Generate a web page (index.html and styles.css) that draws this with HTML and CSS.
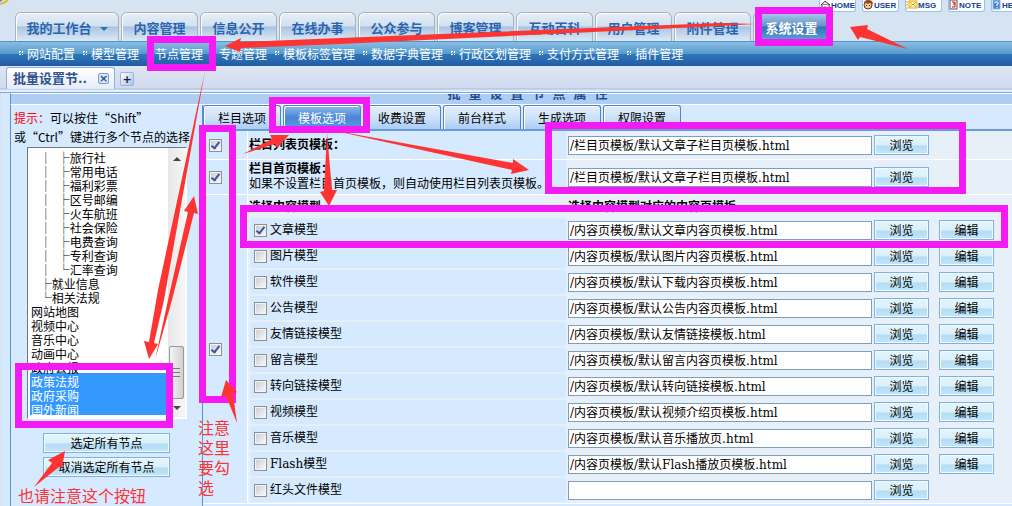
FILE: index.html
```
<!DOCTYPE html>
<html lang="zh-CN">
<head>
  <meta charset="UTF-8">
  <meta name="viewport" content="width=device-width, initial-scale=1.0">
  <title>批量设置节点属性</title>
  <link rel="stylesheet" href="styles.css">
</head>
<body>
  <div class="page">
    <header class="header">
      <svg class="logo" width="12" height="14" viewBox="0 0 12 14">
        <path d="M0 0h3L0 2z" fill="#4b83cd" />
        <path d="M0 4 C3 3 6 2 8 0" fill="none" stroke="#f0b429" stroke-width="2" />
      </svg>
      <div class="quick-links">
        <a href="#home">
          <svg width="11" height="11" viewBox="0 0 11 11"><path d="M1 5 L5 1 L10 5z" fill="#ddd" stroke="#444" /><path d="M2 5v4h2v-2h2v2h3V5" fill="#fff" stroke="#555" /></svg>HOME
        </a>
        <a href="#user">
          <svg width="11" height="11" viewBox="0 0 11 11"><circle cx="5" cy="5" r="4" fill="#f6c79b" stroke="#6b3310" /><path d="M1 4 Q1 0 5 0 Q10 0 10 4 L7 3 L5 4 L3 3z" fill="#8a4a1c" /><path d="M3 5h1v1H3zM6 5h1v1H6z" fill="#333" /></svg>USER
        </a>
        <a href="#msg">
          <svg width="12" height="11" viewBox="0 0 12 11"><path d="M0 2h2M0 5h2M0 8h2" stroke="#f0a000" /><rect x="3" y="1" width="8" height="7" fill="#fff6c8" stroke="#e6a700" /><path d="M4 2l3 3 3-3M4 7l2-2M10 7L8 5" fill="none" stroke="#e6a700" /></svg>MSG
        </a>
        <a href="#note">
          <svg width="10" height="11" viewBox="0 0 10 11"><rect x="1" y="0" width="7" height="9" fill="#fff" stroke="#555" /><path d="M3 2h3v5H3M4 4h2" fill="none" stroke="#d00" /></svg>NOTE
        </a>
        <a href="#help">
          <svg width="10" height="11" viewBox="0 0 10 11"><rect x="1" y="0" width="7" height="9" fill="#4b83cd" stroke="#8fb6e6" /><path d="M3 3V2h3v2H5v2M5 7v1" fill="none" stroke="#fff" /></svg>HELP
        </a>
      </div>
      <nav class="main-tabs">
        <a class="wide" href="#desk">我的工作台<span class="caret"></span></a>
        <a href="#content">内容管理</a>
        <a href="#info">信息公开</a>
        <a href="#online">在线办事</a>
        <a href="#public">公众参与</a>
        <a href="#blog">博客管理</a>
        <a href="#wiki">互动百科</a>
        <a href="#users">用户管理</a>
        <a href="#files">附件管理</a>
        <a class="active" href="#system">系统设置</a>
      </nav>
    </header>

    <nav class="sub-nav">
      <a href="#site">网站配置</a>
      <a href="#model">模型管理</a>
      <a href="#node">节点管理</a>
      <a href="#special">专题管理</a>
      <a href="#label">模板标签管理</a>
      <a href="#dict">数据字典管理</a>
      <a href="#region">行政区划管理</a>
      <a href="#pay">支付方式管理</a>
      <a href="#plugin">插件管理</a>
    </nav>

    <div class="work-tabs">
      <div class="work-tab">批量设置节..<button type="button" class="close" aria-label="关闭">×</button></div>
      <button type="button" class="add" aria-label="新建">+</button>
    </div>

    <main class="frame">
      <h1 class="title"><span>批量设置节点属性</span></h1>
      <div class="columns">
        <aside class="side">
          <p class="hint"><label for="nodes"><em>提示：</em>可以按住“Shift”<br>或“Ctrl”键进行多个节点的选择</label></p>
          <div class="node-box">
            <select id="nodes" multiple size="19">
              <option>&ensp;&nbsp;│&ensp;├旅行社</option>
              <option>&ensp;&nbsp;│&ensp;├常用电话</option>
              <option>&ensp;&nbsp;│&ensp;├福利彩票</option>
              <option>&ensp;&nbsp;│&ensp;├区号邮编</option>
              <option>&ensp;&nbsp;│&ensp;├火车航班</option>
              <option>&ensp;&nbsp;│&ensp;├社会保险</option>
              <option>&ensp;&nbsp;│&ensp;├电费查询</option>
              <option>&ensp;&nbsp;│&ensp;├专利查询</option>
              <option>&ensp;&nbsp;│&ensp;└汇率查询</option>
              <option>&ensp;&nbsp;├就业信息</option>
              <option>&ensp;&nbsp;└相关法规</option>
              <option>网站地图</option>
              <option>视频中心</option>
              <option>音乐中心</option>
              <option>动画中心</option>
              <option>政府公报</option>
              <option selected>政策法规</option>
              <option selected>政府采购</option>
              <option selected>国外新闻</option>
            </select>
            <div class="scrollbar">
              <span class="arrow-up"></span>
              <span class="thumb"></span>
              <span class="arrow-down"></span>
            </div>
          </div>
          <div class="side-buttons">
            <button type="button" class="btn">选定所有节点</button>
            <button type="button" class="btn">取消选定所有节点</button>
          </div>
        </aside>

        <section class="main">
          <div class="tabs">
            <button type="button">栏目选项</button>
            <button type="button" class="active">模板选项</button>
            <button type="button">收费设置</button>
            <button type="button">前台样式</button>
            <button type="button">生成选项</button>
            <button type="button">权限设置</button>
          </div>

          <div class="setting">
            <div class="check"><input type="checkbox" aria-label="设置栏目列表页模板" checked></div>
            <div class="name"><label for="listTpl">栏目列表页模板：</label></div>
            <div class="value"><input type="text" id="listTpl" value="/栏目页模板/默认文章子栏目页模板.html"><button type="button" class="btn">浏览</button></div>
          </div>
          <div class="setting tall">
            <div class="check"><input type="checkbox" aria-label="设置栏目首页模板" checked></div>
            <div class="name"><label for="indexTpl">栏目首页模板：</label><small>如果不设置栏目首页模板，则自动使用栏目列表页模板。</small></div>
            <div class="value"><input type="text" id="indexTpl" value="/栏目页模板/默认文章子栏目页模板.html"><button type="button" class="btn">浏览</button></div>
          </div>
          <div class="setting models">
            <div class="check"><input type="checkbox" aria-label="设置内容模型" checked></div>
            <table>
              <thead>
                <tr><th>选择内容模型</th><th>选择内容模型对应的内容页模板</th></tr>
              </thead>
              <tbody>
                <tr>
                  <td><label><input type="checkbox" checked>文章模型</label></td>
                  <td><div class="value"><input type="text" aria-label="文章模型模板" value="/内容页模板/默认文章内容页模板.html"><button type="button" class="btn">浏览</button><button type="button" class="btn edit">编辑</button></div></td>
                </tr>
                <tr>
                  <td><label><input type="checkbox">图片模型</label></td>
                  <td><div class="value"><input type="text" aria-label="图片模型模板" value="/内容页模板/默认图片内容页模板.html"><button type="button" class="btn">浏览</button><button type="button" class="btn edit">编辑</button></div></td>
                </tr>
                <tr>
                  <td><label><input type="checkbox">软件模型</label></td>
                  <td><div class="value"><input type="text" aria-label="软件模型模板" value="/内容页模板/默认下载内容页模板.html"><button type="button" class="btn">浏览</button><button type="button" class="btn edit">编辑</button></div></td>
                </tr>
                <tr>
                  <td><label><input type="checkbox">公告模型</label></td>
                  <td><div class="value"><input type="text" aria-label="公告模型模板" value="/内容页模板/默认公告内容页模板.html"><button type="button" class="btn">浏览</button><button type="button" class="btn edit">编辑</button></div></td>
                </tr>
                <tr>
                  <td><label><input type="checkbox">友情链接模型</label></td>
                  <td><div class="value"><input type="text" aria-label="友情链接模型模板" value="/内容页模板/默认友情链接模板.html"><button type="button" class="btn">浏览</button><button type="button" class="btn edit">编辑</button></div></td>
                </tr>
                <tr>
                  <td><label><input type="checkbox">留言模型</label></td>
                  <td><div class="value"><input type="text" aria-label="留言模型模板" value="/内容页模板/默认留言内容页模板.html"><button type="button" class="btn">浏览</button><button type="button" class="btn edit">编辑</button></div></td>
                </tr>
                <tr>
                  <td><label><input type="checkbox">转向链接模型</label></td>
                  <td><div class="value"><input type="text" aria-label="转向链接模型模板" value="/内容页模板/默认转向链接模板.html"><button type="button" class="btn">浏览</button><button type="button" class="btn edit">编辑</button></div></td>
                </tr>
                <tr>
                  <td><label><input type="checkbox">视频模型</label></td>
                  <td><div class="value"><input type="text" aria-label="视频模型模板" value="/内容页模板/默认视频介绍页模板.html"><button type="button" class="btn">浏览</button><button type="button" class="btn edit">编辑</button></div></td>
                </tr>
                <tr>
                  <td><label><input type="checkbox">音乐模型</label></td>
                  <td><div class="value"><input type="text" aria-label="音乐模型模板" value="/内容页模板/默认音乐播放页.html"><button type="button" class="btn">浏览</button><button type="button" class="btn edit">编辑</button></div></td>
                </tr>
                <tr>
                  <td><label><input type="checkbox">Flash模型</label></td>
                  <td><div class="value"><input type="text" aria-label="Flash模型模板" value="/内容页模板/默认Flash播放页模板.html"><button type="button" class="btn">浏览</button><button type="button" class="btn edit">编辑</button></div></td>
                </tr>
                <tr>
                  <td><label><input type="checkbox">红头文件模型</label></td>
                  <td><div class="value"><input type="text" aria-label="红头文件模型模板"><button type="button" class="btn">浏览</button></div></td>
                </tr>
              </tbody>
            </table>
          </div>
        </section>
      </div>
    </main>

    <!-- 标注层 -->
    <div class="marks">
      <svg width="1012" height="506" viewBox="0 0 1012 506">
        <g fill="none" stroke="#f31af3" stroke-width="7">
          <rect x="758.5" y="10.5" width="71" height="32" />
          <rect x="150.5" y="39.5" width="62" height="28" />
          <rect x="272.5" y="100.5" width="94" height="29" />
          <rect x="202.5" y="128.5" width="30" height="271" />
          <rect x="548.5" y="125.5" width="414" height="65" />
          <rect x="243.5" y="208.5" width="761" height="36" />
          <rect x="18.5" y="366.5" width="151" height="58" />
        </g>
        <g fill="#fd3431">
          <path d="M850 27 L868 25 L867 29 L908 49 L860 37 L858 40z" />
          <path d="M225 46 L241 38 L240 42 L340 38 L720 23 L755 24 L720 26 L340 44 L241 48 L240 52z" />
          <path d="M205 71 L158 290 L149 342 L144 341 L149 359 L158 344 L154 343 L164 300z" />
          <path d="M194 196 L198 214 L194 213 L172 300 L155 360 L168 300 L188 212 L184 211z" />
          <path d="M289 135 L270 135 L272 139 L243 154 L275 144 L277 148z" />
          <path d="M327 133 L324 191 L320 192 L329 206 L337 190 L332 190z" />
          <path d="M331 130 L513 163 L513 159 L529 170 L511 174 L512 170z" />
          <path d="M226 380 L221 397 L226 396 L237 423 L233 394 L237 392z" />
          <path d="M65 451 L48 460 L52 463 L34 487 L59 467 L62 468z" />
        </g>
      </svg>
      <p class="mark-note narrow">注意这里要勾选</p>
      <p class="mark-note bottom">也请注意这个按钮</p>
    </div>
  </div>
</body>
</html>
```
FILE: styles.css
```
:root {
  --text: #000;
  --link: #2a64ad;
  --panel: #d5e9ff;
  --pale: #e7eff9;
  --line: #5b8fce;
  --field-border: #7b9ebd;
  --mark: #f33;
}

*,
*::before {
  box-sizing: border-box;
}

body {
  margin: 0;
  font-family: "DejaVu Serif", "Noto Sans CJK SC", serif;
  font-size: 12px;
  line-height: 16px;
  color: var(--text);
  background: #d6e4f2;
}

a {
  text-decoration: none;
}

button,
input,
select {
  font: inherit;
  color: inherit;
  margin: 0;
}

.page {
  position: relative;
  display: flex;
  flex-direction: column;
  min-height: 100vh;
  overflow: hidden;
}

/* header */
.header {
  display: flex;
  flex-direction: column;
  position: relative;
  height: 41px;
}

.logo {
  position: absolute;
  left: 0;
  top: 0;
}

.quick-links {
  display: flex;
  justify-content: flex-end;
  gap: 6px;
  height: 12px;
  margin-right: -16px;
}

.quick-links a {
  display: flex;
  align-items: center;
  width: 37px;
  height: 12px;
  border: 1px solid #8fc4f5;
  border-top: 0;
  border-radius: 0 0 3px 3px;
  background: #fff;
  color: #123f94;
  font: bold 8px/10px "Liberation Sans", sans-serif;
}

.quick-links svg {
  flex: none;
}

.main-tabs {
  display: flex;
  gap: 2px;
  height: 29px;
  padding-left: 15px;
}

.main-tabs a {
  display: flex;
  align-items: center;
  justify-content: center;
  width: 77px;
  padding-top: 4px;
  border: 1px solid #a9b3bf;
  border-bottom: 0;
  border-radius: 6px 6px 0 0;
  background: linear-gradient(#e6eef7, #d3e1f1 45%, #a9c5e3 50%, #dde9f5);
  box-shadow: inset 1px 1px 0 #fff;
  color: var(--link);
  font-size: 13px;
  font-weight: bold;
}

.main-tabs .wide {
  width: 104px;
}

.main-tabs .active {
  background: linear-gradient(#a9c9e8, #6795c9 45%, #3373b5 50%, #5fa3d6);
  color: #fff;
}

.caret {
  margin-left: 8px;
  border: 4px solid transparent;
  border-top-color: #2f6cb0;
  border-bottom: 0;
}

.sub-nav {
  display: flex;
  align-items: center;
  gap: 8px;
  height: 25px;
  padding: 2px 0 0 19px;
  border-top: 1px solid #4b96d1;
  background: linear-gradient(#8bbde2, #559bd0 48%, #2f77b9 52%, #215ba5);
}

.sub-nav a {
  color: #fff;
  white-space: nowrap;
}

.sub-nav a::before {
  content: "";
  display: inline-block;
  width: 4px;
  height: 4px;
  margin: 0 4px 4px 0;
  border: 1px dotted #fff;
}

/* opened pages */
.work-tabs {
  display: flex;
  align-items: flex-end;
  gap: 5px;
  height: 27px;
  padding: 0 6px 3px;
  border-bottom: 1px solid #7fa8dd;
  background: linear-gradient(#dfe6f4, #d0dbee 22px, #9bbbe9 23px, #e6eefa 24px);
}

.work-tab {
  display: flex;
  align-items: center;
  justify-content: space-between;
  width: 109px;
  height: 22px;
  padding: 0 5px 0 6px;
  border: 1px solid #8fb0e0;
  border-bottom: 0;
  border-radius: 3px 3px 0 0;
  background: linear-gradient(#fff, #e3edfa);
  color: #33518c;
  font-size: 13px;
  font-weight: bold;
  white-space: nowrap;
}

.close,
.add {
  display: flex;
  align-items: center;
  justify-content: center;
  flex: none;
  width: 11px;
  height: 11px;
  padding: 0;
  border: 1px solid #7d9cc9;
  border-radius: 2px;
  background: #dce8f8;
  color: #33518c;
  font: bold 11px/9px "DejaVu Sans", sans-serif;
}

.add {
  width: 14px;
  height: 14px;
  margin-bottom: 3px;
  border-color: #9fb4d8;
  background: linear-gradient(135deg, #fff, #a9bfe4);
  color: #223;
}

/* content frame */
.frame {
  flex: 1;
  display: flex;
  flex-direction: column;
  margin-left: 2px;
  padding-left: 8px;
  background: var(--panel);
}

.title {
  display: flex;
  align-items: flex-end;
  justify-content: center;
  height: 12px;
  margin: 0;
  padding: 0 0 2px 40px;
  overflow: hidden;
  border-left: 1px solid var(--line);
  border-top: 1px solid #fff;
  border-bottom: 1px solid #fff;
  background: #aecdf3;
  color: #1f4d95;
  font-size: 13px;
  line-height: 16px;
  letter-spacing: 8px;
}

.columns {
  flex: 1;
  display: flex;
  border-left: 1px solid var(--line);
}

.side {
  flex: none;
  width: 191px;
  padding: 3px 0 0 3px;
}

.hint {
  margin: 0;
  font-family: "Noto Sans CJK SC", sans-serif;
  line-height: 19px;
  white-space: nowrap;
}

.hint em {
  color: #f00;
  font-style: normal;
}

.node-box {
  display: flex;
  width: 160px;
  height: 272px;
  margin: 1px 0 0 13px;
  padding: 0 1px 1px;
  border: 1px solid #777;
  border-right-color: #fff;
  border-bottom-color: #fff;
  background: #fff;
}

.node-box select {
  flex: 1;
  min-width: 0;
  height: 269px;
  padding: 1px;
  border: 0;
  outline: 0;
  overflow: hidden;
  background: #fff;
  font-family: "Noto Sans CJK SC", sans-serif;
}

.node-box option {
  height: 14px;
  min-height: 14px;
  padding: 0 1px;
  line-height: 14px;
}

.node-box option:checked {
  background: linear-gradient(#39f, #39f);
  color: #fff;
  -webkit-text-fill-color: #fff;
}

.scrollbar {
  display: flex;
  flex-direction: column;
  align-items: center;
  width: 17px;
  padding: 9px 1px 7px;
  background: linear-gradient(90deg, #e8e8e8, #f6f6f6);
}

.arrow-up,
.arrow-down {
  border: 4px solid transparent;
  border-bottom-color: #444;
  border-top: 0;
}

.arrow-down {
  margin-top: 7px;
  border-top: 4px solid #444;
  border-bottom: 0;
}

.thumb {
  width: 15px;
  height: 53px;
  margin-top: auto;
  border: 1px solid #999;
  border-radius: 2px;
  background:
    repeating-linear-gradient(#777 0 1px, transparent 1px 4px) center / 7px 9px no-repeat,
    linear-gradient(90deg, #f5f5f5, #d0d0d0);
}

.side-buttons {
  display: flex;
  flex-direction: column;
  gap: 4px;
  width: 127px;
  margin: 14px 0 0 29px;
}

.btn {
  width: 55px;
  height: 20px;
  padding: 2px 0 0;
  border: 1px solid #7fb2e2;
  background: linear-gradient(#e4f5fc, #d9f0fb 50%, #b5dcf3 55%, #c3e6f9);
  box-shadow: inset 0 0 0 1px #f0faff;
  line-height: 16px;
}

.side-buttons .btn {
  width: 100%;
}

/* settings */
.main {
  flex: 1;
  min-width: 0;
  border-left: 1px solid var(--line);
}

.tabs {
  display: flex;
  gap: 2px;
  height: 26px;
  border-bottom: 2px solid #6b9bd5;
}

.tabs button {
  width: 78px;
  padding: 2px 0 0;
  border: 1px solid #4f86cb;
  border-bottom: 0;
  border-radius: 3px 3px 0 0;
  background: linear-gradient(#e2eefb, #cfe2fa 50%, #a9ccf8);
  box-shadow: inset 1px 1px 0 #fff;
}

.tabs .active {
  background: linear-gradient(#8db8ee, #4a86d4 50%, #5b97e0);
  color: #fff;
}

.setting {
  display: flex;
  min-height: 29px;
  border-bottom: 1px solid #fff;
  background: var(--pale);
}

.setting.tall {
  min-height: 35px;
}

.check {
  display: flex;
  align-items: center;
  flex: none;
  width: 45px;
  padding-left: 6px;
  border-right: 1px solid #fff;
  background: var(--panel);
}

.name {
  display: flex;
  flex-direction: column;
  justify-content: center;
  flex: none;
  width: 318px;
  padding-left: 1px;
  background: var(--panel);
  font-weight: bold;
  line-height: 15px;
}

.name small {
  font-size: 12px;
  font-weight: normal;
  white-space: nowrap;
}

.value {
  display: flex;
  align-items: center;
  flex: 1;
  gap: 2px;
  padding-left: 2px;
}

.value input {
  flex: 0 1 304px;
  min-width: 0;
  height: 19px;
  padding: 0 1px 2px;
  border: 1px solid var(--field-border);
  background: #fff;
}

.value .btn {
  flex: none;
}

.value .edit {
  margin-left: 8px;
}

input[type="checkbox"] {
  appearance: none;
  flex: none;
  width: 13px;
  height: 13px;
  border: 1px solid #8e8f8f;
  background: linear-gradient(135deg, #cbcfd5, #f6f6f6) center / 9px 9px no-repeat #f4f4f4;
}

input[type="checkbox"]:checked::before {
  content: "";
  display: block;
  width: 5px;
  height: 9px;
  margin: 0 0 0 3px;
  border: solid #3a559f;
  border-width: 0 2px 2px 0;
  transform: rotate(38deg);
}

.models table {
  flex: 1;
  table-layout: fixed;
  width: 100%;
  border-spacing: 0;
}

.models th {
  height: 22px;
  padding: 2px 2px 0;
  text-align: left;
}

.models th:first-child {
  width: 318px;
  padding-left: 1px;
}

.models td {
  height: 26px;
  padding: 0;
}

.models td:first-child {
  border: solid var(--pale);
  border-width: 1px 0 1px 2px;
  background: var(--panel);
}

.models label {
  display: flex;
  align-items: center;
  gap: 3px;
  padding-left: 4px;
}

/* annotations drawn over the page */
.marks {
  position: absolute;
  top: 0;
  left: 0;
  pointer-events: none;
}

.marks svg {
  display: block;
}

.mark-note {
  position: absolute;
  margin: 0;
  color: var(--mark);
  font-family: "Noto Sans CJK SC", sans-serif;
  font-size: 16px;
  line-height: 20px;
}

.mark-note.narrow {
  left: 198px;
  top: 417px;
  width: 34px;
}

.mark-note.bottom {
  left: 18px;
  top: 485px;
  white-space: nowrap;
}
```
